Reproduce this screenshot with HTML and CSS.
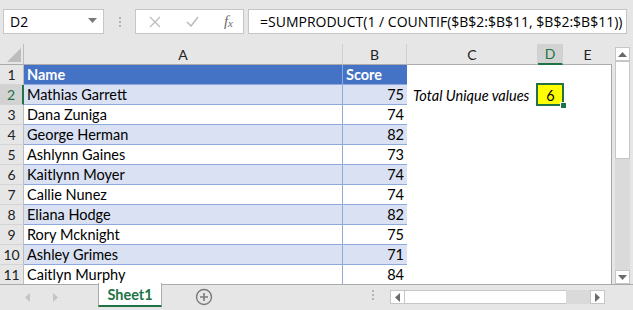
FILE: index.html
```html
<!DOCTYPE html>
<html lang="en">
<head>
    <meta charset="UTF-8">
    <title>Total Unique values</title>
    <link rel="stylesheet" href="styles.css">
</head>
<body>
    <div class="formula-bar">
        <div class="name-box">
            <span>D2</span>
            <svg class="caret" width="9" height="5" viewBox="0 0 9 5"><path d="M0 0h9L4.5 5z" fill="#7a7a7a"/></svg>
        </div>
        <div class="grip"><i></i><i></i><i></i></div>
        <div class="fx-buttons">
            <svg width="12" height="12" viewBox="0 0 12 12"><path d="M1 1l10 10M11 1L1 11" stroke="#bdbdbd" stroke-width="1.3"/></svg>
            <svg width="13" height="11" viewBox="0 0 13 11"><path d="M1 6l4 4 7-9" stroke="#bdbdbd" stroke-width="1.6" fill="none"/></svg>
            <span class="fx">f<sub>x</sub></span>
        </div>
        <div class="formula-input">
            <span>=SUMPRODUCT(1 / COUNTIF($B$2:$B$11, $B$2:$B$11))</span>
            <svg width="10" height="6" viewBox="0 0 10 6"><path d="M1 1l4 4 4-4" stroke="#6b6b6b" stroke-width="1.6" fill="none"/></svg>
        </div>
    </div>

    <div class="sheet">
        <div class="grid">
            <div class="corner"><svg width="14" height="14" viewBox="0 0 14 14"><path d="M14 0v14H0z" fill="#bdbdbd"/></svg></div>
            <div class="col-head">A</div>
            <div class="col-head">B</div>
            <div class="col-head">C</div>
            <div class="col-head active">D</div>
            <div class="col-head last">E</div>

            <div class="row-head">1</div>
            <div class="cell t-head name">Name</div>
            <div class="cell t-head">Score</div>
            <div class="cell"></div><div class="cell"></div><div class="cell edge"></div>

            <div class="row-head active">2</div>
            <div class="cell band name">Mathias Garrett</div>
            <div class="cell band num">75</div>
            <div class="cell label">Total Unique values</div>
            <div class="cell result">6<span class="selection"></span><span class="handle"></span></div>
            <div class="cell edge"></div>

            <div class="row-head">3</div>
            <div class="cell name">Dana Zuniga</div>
            <div class="cell num">74</div>
            <div class="cell"></div><div class="cell"></div><div class="cell edge"></div>

            <div class="row-head">4</div>
            <div class="cell band name">George Herman</div>
            <div class="cell band num">82</div>
            <div class="cell"></div><div class="cell"></div><div class="cell edge"></div>

            <div class="row-head">5</div>
            <div class="cell name">Ashlynn Gaines</div>
            <div class="cell num">73</div>
            <div class="cell"></div><div class="cell"></div><div class="cell edge"></div>

            <div class="row-head">6</div>
            <div class="cell band name">Kaitlynn Moyer</div>
            <div class="cell band num">74</div>
            <div class="cell"></div><div class="cell"></div><div class="cell edge"></div>

            <div class="row-head">7</div>
            <div class="cell name">Callie Nunez</div>
            <div class="cell num">74</div>
            <div class="cell"></div><div class="cell"></div><div class="cell edge"></div>

            <div class="row-head">8</div>
            <div class="cell band name">Eliana Hodge</div>
            <div class="cell band num">82</div>
            <div class="cell"></div><div class="cell"></div><div class="cell edge"></div>

            <div class="row-head">9</div>
            <div class="cell name">Rory Mcknight</div>
            <div class="cell num">75</div>
            <div class="cell"></div><div class="cell"></div><div class="cell edge"></div>

            <div class="row-head">10</div>
            <div class="cell band name">Ashley Grimes</div>
            <div class="cell band num">71</div>
            <div class="cell"></div><div class="cell"></div><div class="cell edge"></div>

            <div class="row-head">11</div>
            <div class="cell name">Caitlyn Murphy</div>
            <div class="cell num">84</div>
            <div class="cell"></div><div class="cell"></div><div class="cell edge"></div>
        </div>

        <div class="vscroll">
            <div class="v-btn"><svg width="9" height="5" viewBox="0 0 9 5"><path d="M4.5 0L9 5H0z" fill="#6b6b6b"/></svg></div>
            <div class="v-track">
                <div class="v-thumb"></div>
            </div>
            <div class="v-btn"><svg width="9" height="5" viewBox="0 0 9 5"><path d="M0 0h9L4.5 5z" fill="#6b6b6b"/></svg></div>
        </div>
    </div>

    <div class="tab-bar">
        <div class="tab-nav">
            <svg width="5" height="9" viewBox="0 0 5 9"><path d="M5 0v9L0 4.5z" fill="#c4c4c4"/></svg>
            <svg width="5" height="9" viewBox="0 0 5 9"><path d="M0 0v9l5-4.5z" fill="#c4c4c4"/></svg>
        </div>
        <div class="tab">Sheet1</div>
        <svg class="add-sheet" width="18" height="18" viewBox="0 0 18 18"><circle cx="9" cy="9" r="7.5" fill="none" stroke="#7a7a7a" stroke-width="1.4"/><path d="M9 5v8M5 9h8" stroke="#7a7a7a" stroke-width="1.6"/></svg>
        <div class="grip tab-grip"><i></i><i></i><i></i></div>
        <div class="hscroll">
            <div class="h-btn"><svg width="5" height="9" viewBox="0 0 5 9"><path d="M5 0v9L0 4.5z" fill="#6b6b6b"/></svg></div>
            <div class="h-thumb"></div>
            <div class="h-track"></div>
            <div class="h-btn"><svg width="5" height="9" viewBox="0 0 5 9"><path d="M0 0v9l5-4.5z" fill="#6b6b6b"/></svg></div>
        </div>
    </div>
</body>
</html>
```

FILE: styles.css
```css
body {
    margin: 0;
    width: 633px;
    height: 310px;
    overflow: hidden;
    background-color: #e6e6e6;
    font-family: Lato, 'Liberation Sans', sans-serif;
    color: #000;
}

/* formula bar */
.formula-bar {
    height: 44px;
    display: flex;
    align-items: flex-start;
    padding: 9px 0 0 3px;
    box-sizing: border-box;
    font-family: 'Open Sans', 'Noto Sans', sans-serif;
    font-size: 14px;
}
.name-box {
    width: 101px;
    height: 25px;
    box-sizing: border-box;
    background: #fff;
    border: 1px solid #c6c6c6;
    display: flex;
    align-items: center;
    justify-content: space-between;
    padding: 0 6px 0 6px;
}
.name-box .caret {
    margin-top: -2px;
}
.grip {
    display: flex;
    flex-direction: column;
    gap: 2px;
    width: 31px;
    align-items: center;
    padding-top: 8px;
}
.grip i {
    width: 2px;
    height: 2px;
    background: #b4b4b4;
}
.fx-buttons {
    width: 109px;
    height: 25px;
    box-sizing: border-box;
    background: #fff;
    border: 1px solid #c6c6c6;
    display: flex;
    align-items: center;
    justify-content: space-between;
    padding: 0 10px 0 13px;
}
.fx {
    font-family: 'Liberation Serif', serif;
    font-style: italic;
    font-size: 15px;
    color: #6b6b6b;
}
.fx sub {
    font-size: 11px;
    vertical-align: -1px;
}
.formula-input {
    margin-left: 4px;
    width: 379px;
    height: 25px;
    box-sizing: border-box;
    background: #fff;
    border: 1px solid #c6c6c6;
    display: flex;
    align-items: center;
    justify-content: space-between;
    padding: 0 8px 0 11px;
    white-space: nowrap;
}

/* sheet grid */
.sheet {
    display: flex;
    height: 240px;
}
.grid {
    display: grid;
    grid-template-columns: 24px 319px 64px 131px 25px 49px;
    grid-template-rows: 21px repeat(11, 20px);
    height: 240px;
    overflow: hidden;
    font-size: 14.5px;
}
.corner {
    border-right: 1px solid #bdbdbd;
    border-bottom: 1px solid #ababab;
    display: flex;
    align-items: flex-end;
    justify-content: flex-end;
    padding: 0 2px 2px 0;
}
.col-head {
    border-right: 1px solid #d0d0d0;
    border-bottom: 1px solid #ababab;
    display: flex;
    align-items: center;
    justify-content: center;
    font-size: 14px;
    color: #222;
}
.col-head.last {
    border-right: 0;
}
.col-head.active {
    background: #d2d2d2;
    color: #217346;
    border-bottom: 2px solid #217346;
}
.row-head {
    border-right: 1px solid #bdbdbd;
    border-bottom: 1px solid #d4d4d4;
    display: flex;
    align-items: center;
    justify-content: center;
    font-size: 14px;
    color: #222;
}
.row-head.active {
    background: #d2d2d2;
    color: #217346;
    border-right: 2px solid #217346;
}
.cell {
    background: #fff;
    display: flex;
    align-items: center;
    padding: 0 3px;
    white-space: nowrap;
}
.cell.name {
    border-right: 1px solid #8ea9db;
}
.cell.name, .cell.num {
    border-bottom: 1px solid #8ea9db;
}
.cell.band {
    background: #d9e1f2;
}
.cell.t-head {
    background: #4472c4;
    color: #fff;
    font-weight: bold;
    border-bottom: 1px solid #8ea9db;
}
.cell.t-head.name {
    border-right: 1px solid #8ea9db;
}
.cell.num {
    justify-content: flex-end;
}
.cell.label {
    font-style: italic;
    padding-left: 6px;
}
.cell.result {
    position: relative;
    background: #ffff00;
    justify-content: center;
    z-index: 1;
}
.cell.edge {
    border-right: 1px solid #a6a6a6;
}
.selection {
    position: absolute;
    left: -2px;
    top: -2px;
    right: -1px;
    bottom: -1px;
    border: 2px solid #217346;
}
.handle {
    position: absolute;
    right: -4px;
    bottom: -4px;
    width: 5px;
    height: 5px;
    background: #217346;
    border: 1px solid #fff;
}

/* vertical scrollbar */
.vscroll {
    width: 21px;
    padding: 3px 3px 0 3px;
    box-sizing: border-box;
    display: flex;
    flex-direction: column;
}
.v-btn {
    width: 15px;
    height: 14px;
    box-sizing: border-box;
    background: #fff;
    border: 1px solid #c6c6c6;
    display: flex;
    align-items: center;
    justify-content: center;
}
.v-track {
    flex: 1;
    width: 15px;
    background: #dadada;
}
.v-thumb {
    height: 98px;
    box-sizing: border-box;
    background: #fff;
    border: 1px solid #c6c6c6;
}

/* sheet tabs */
.tab-bar {
    height: 26px;
    border-top: 1px solid #ababab;
    display: flex;
    align-items: flex-start;
    box-sizing: border-box;
}
.tab-nav {
    display: flex;
    gap: 23px;
    width: 98px;
    padding: 8px 0 0 25px;
    box-sizing: border-box;
}
.tab {
    width: 64px;
    height: 24px;
    margin-top: -2px;
    box-sizing: border-box;
    background: #fff;
    border-left: 1px solid #ababab;
    border-right: 1px solid #ababab;
    border-bottom: 2px solid #217346;
    color: #217346;
    font-weight: bold;
    font-size: 14.5px;
    display: flex;
    align-items: center;
    justify-content: center;
}
.add-sheet {
    margin: 3px 0 0 33px;
}
.tab-grip {
    margin-left: 158px;
    width: 3px;
    padding-top: 5px;
}
.hscroll {
    display: flex;
    margin: 5px 0 0 16px;
    height: 14px;
}
.h-btn {
    width: 15px;
    height: 14px;
    box-sizing: border-box;
    background: #fff;
    border: 1px solid #c6c6c6;
    display: flex;
    align-items: center;
    justify-content: center;
}
.h-thumb {
    width: 161px;
    box-sizing: border-box;
    background: #fff;
    border-top: 1px solid #c6c6c6;
    border-bottom: 1px solid #c6c6c6;
}
.h-track {
    width: 24px;
    background: #dadada;
}
```
